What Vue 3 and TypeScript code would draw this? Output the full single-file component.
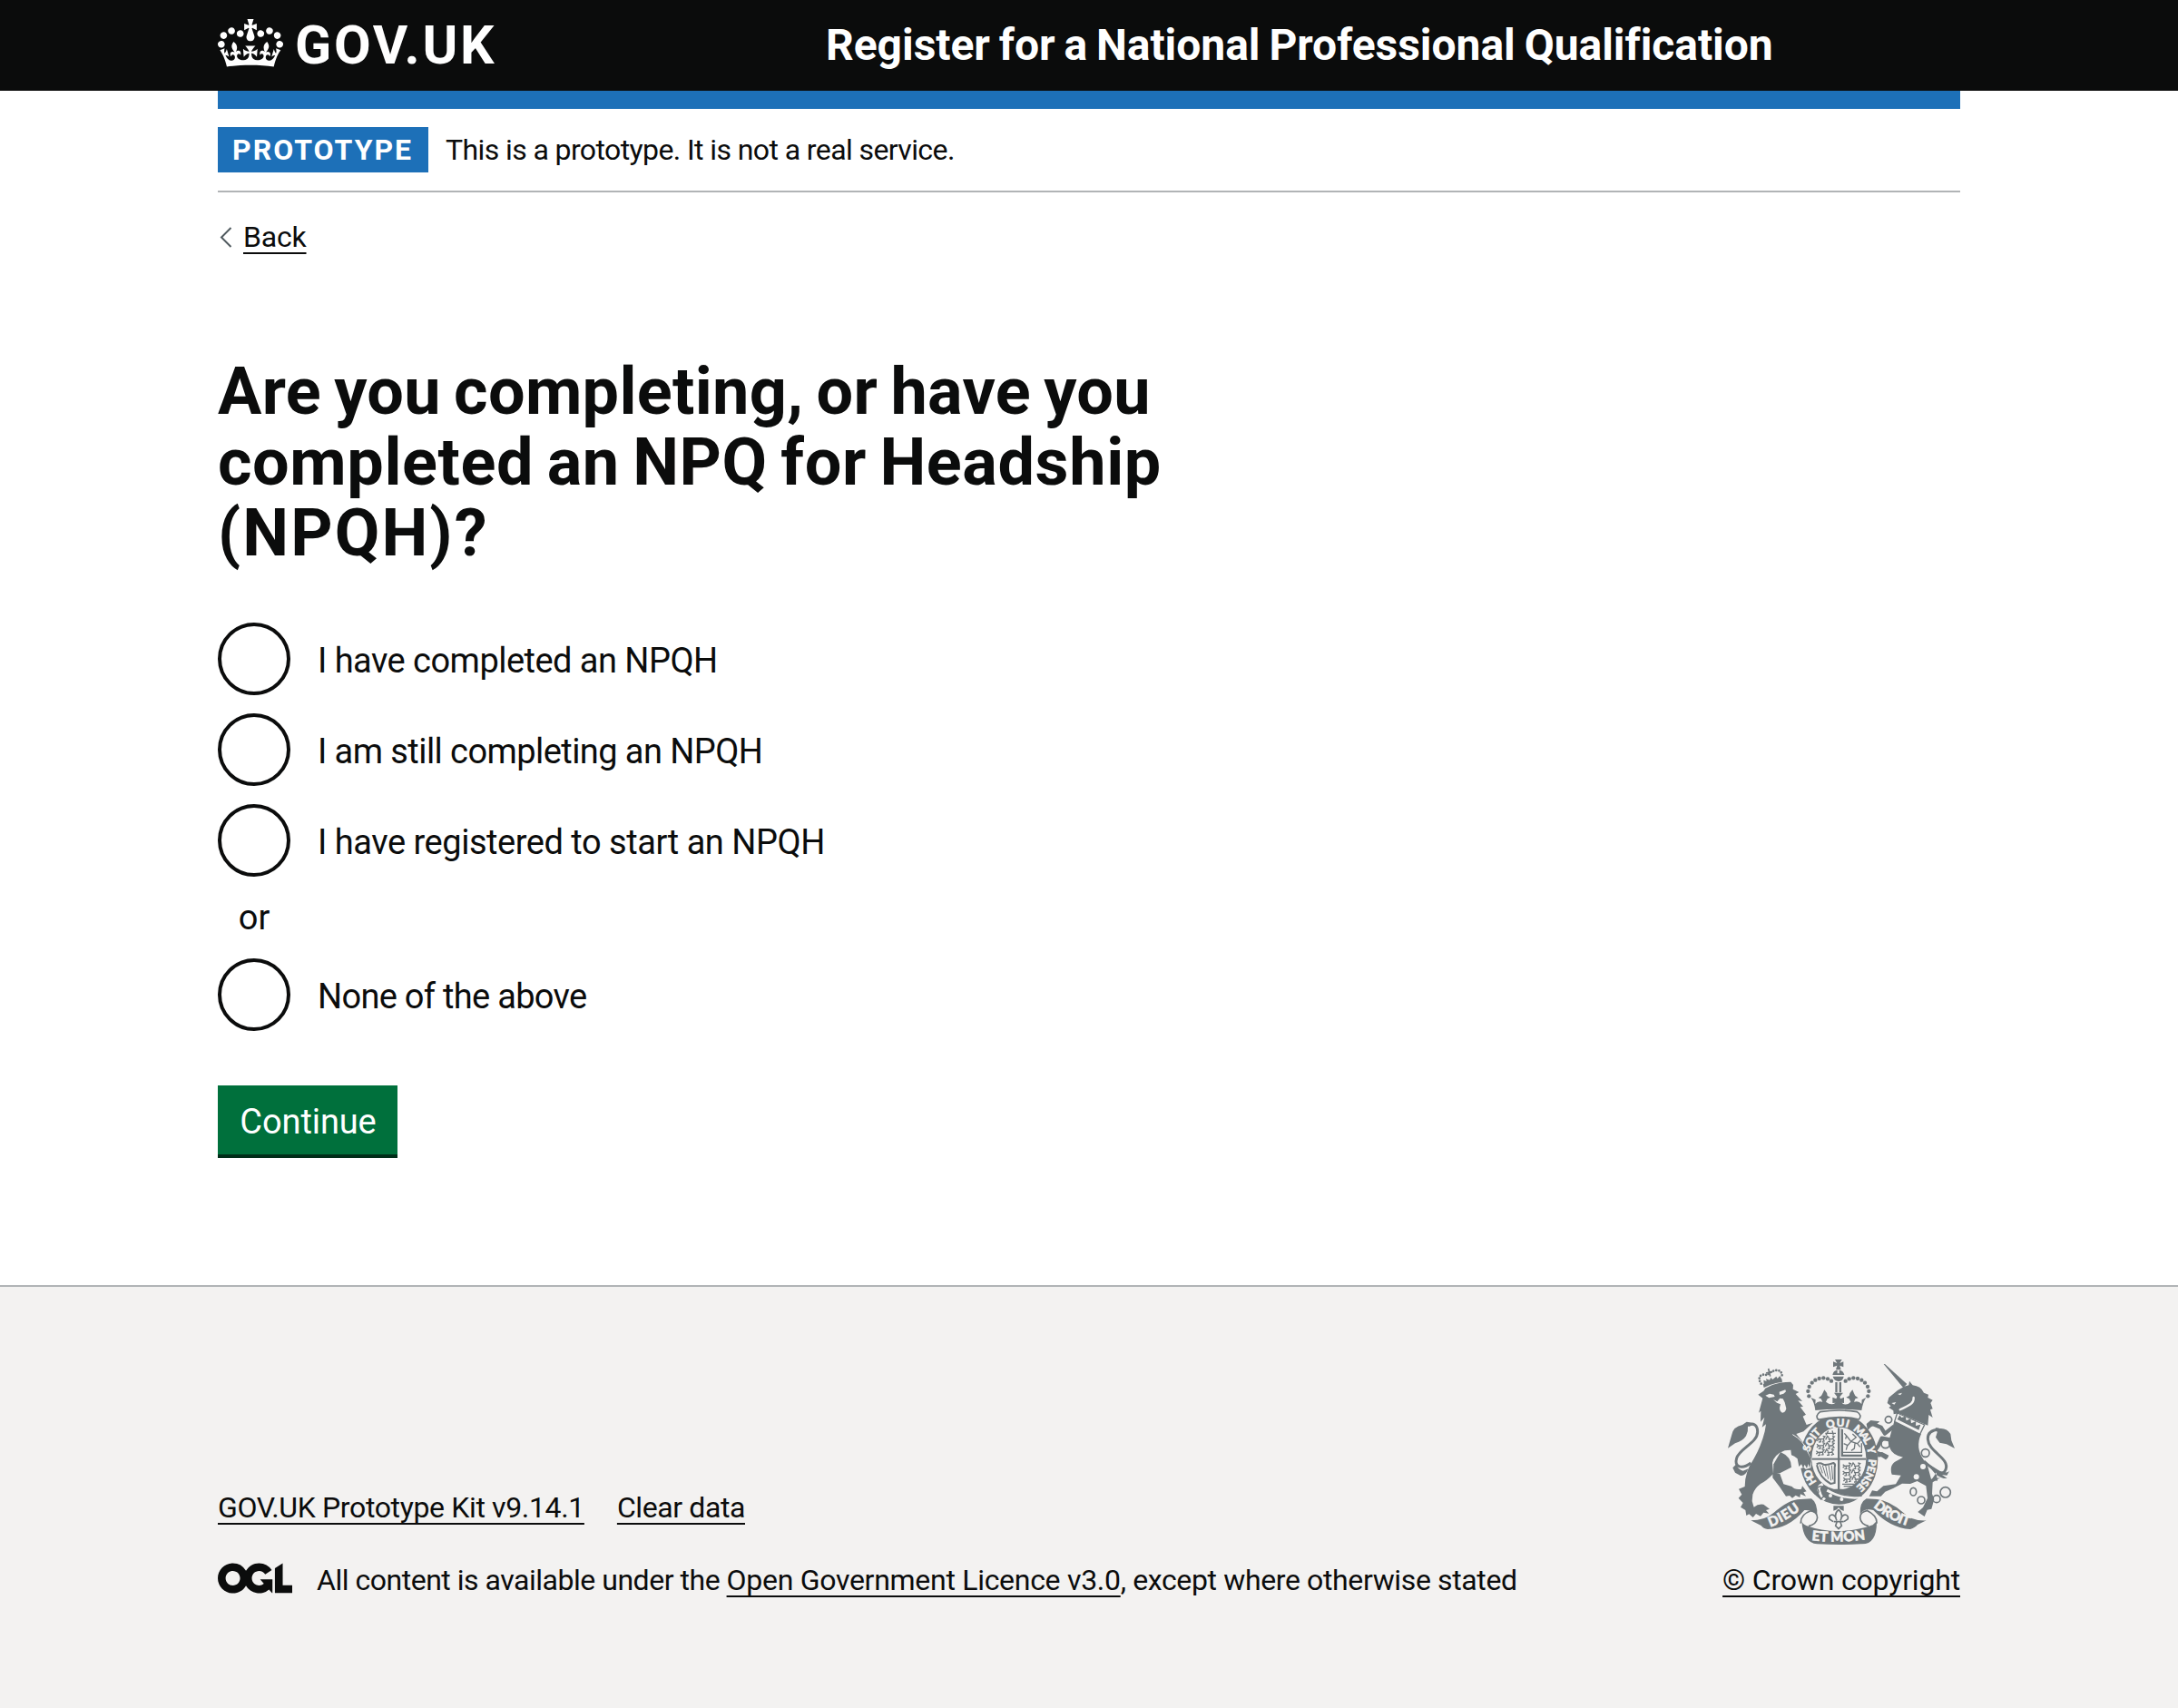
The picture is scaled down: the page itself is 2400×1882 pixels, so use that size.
<script setup lang="ts">
interface Run {
  text: string
  spacing: number
}

const headingLines: Run[] = [
  { text: 'Are you completing, or have you', spacing: 0.33 },
  { text: 'completed an NPQ for Headship', spacing: 0.6 },
  { text: '(NPQH)?', spacing: 2.1 },
]

const options: Run[] = [
  { text: 'I have completed an NPQH', spacing: -0.53 },
  { text: 'I am still completing an NPQH', spacing: -0.57 },
  { text: 'I have registered to start an NPQH', spacing: -0.47 },
]

const metaLinks: Run[] = [
  { text: 'GOV.UK Prototype Kit v9.14.1', spacing: -0.36 },
  { text: 'Clear data', spacing: -0.4 },
]

const track = (run: Run) => ({ letterSpacing: `${run.spacing}px` })

// Pearls on the arches of the St Edward's crown, left side; the right side is mirrored.
const pearls: [number, number][] = [
  [310, 145], [307, 129], [311, 114], [320, 101], [331, 92], [344, 87], [358, 85], [372, 88], [384, 95],
]

// Lions passant in the two England quarters of the shield.
const lions: [number, number][] = [
  [334, 282], [333, 304], [331, 326], [419, 371], [419, 393], [421, 415],
]
</script>

<template>
  <div class="page">
    <header class="header">
      <div class="wrap header-row">
        <a class="logo">
          <svg class="crown" viewBox="0 0 132 97" width="72" height="53">
            <path fill="currentColor" fill-rule="evenodd" d="M25 30.2c3.5 1.5 7.7-.2 9.1-3.7 1.5-3.6-.2-7.8-3.9-9.2-3.6-1.4-7.6.3-9.1 3.9-1.4 3.5.3 7.5 3.9 9zM9 39.5c3.6 1.5 7.8-.2 9.2-3.7 1.5-3.6-.2-7.8-3.9-9.1-3.6-1.5-7.6.2-9.1 3.8-1.4 3.5.3 7.5 3.8 9zM4.4 57.2c3.5 1.5 7.7-.2 9.1-3.8 1.5-3.6-.2-7.7-3.9-9.1-3.5-1.5-7.6.3-9.1 3.8-1.4 3.5.3 7.6 3.9 9.1zm38.3-21.4c3.5 1.5 7.7-.2 9.1-3.8 1.5-3.6-.2-7.7-3.9-9.1-3.6-1.5-7.6.3-9.1 3.8-1.3 3.6.4 7.7 3.9 9.1zm64.4-5.6c-3.6 1.5-7.8-.2-9.1-3.7-1.5-3.6.2-7.8 3.8-9.2 3.6-1.4 7.7.3 9.2 3.9 1.3 3.5-.4 7.5-3.9 9zm15.9 9.3c-3.6 1.5-7.7-.2-9.1-3.7-1.5-3.6.2-7.8 3.7-9.1 3.6-1.5 7.7.2 9.2 3.8 1.5 3.5-.3 7.5-3.8 9zm4.7 17.7c-3.6 1.5-7.8-.2-9.2-3.8-1.5-3.6.2-7.7 3.9-9.1 3.6-1.5 7.7.3 9.2 3.8 1.3 3.5-.4 7.6-3.9 9.1zM89.3 35.8c-3.6 1.5-7.8-.2-9.2-3.8-1.4-3.6.2-7.7 3.9-9.1 3.6-1.5 7.7.3 9.2 3.8 1.4 3.6-.3 7.7-3.9 9.1zM69.7 17.7l8.9 4.7V9.3l-8.9 2.8c-.2-.3-.5-.6-.9-.9L72.4 0H59.6l3.5 11.2c-.3.3-.6.5-.9.9l-8.8-2.8v13.1l8.8-4.7c.3.3.6.7.9.9l-5 15.4v.1c-.2.8-.4 1.6-.4 2.4 0 4.1 3.1 7.5 7 8.1h.2c.3 0 .7.1 1 .1.4 0 .7 0 1-.1h.2c4-.6 7.1-4.1 7.1-8.1 0-.8-.1-1.7-.4-2.4V34l-5.1-15.4c.4-.2.7-.6 1-.9zM66 92.8c16.9 0 32.8 1.1 47.1 3.2 4-16.9 8.9-26.7 14-33.5l-9.6-3.4c1 4.9 1.1 7.2 0 10.2-1.5-1.4-3-4.3-4.2-8.7L108.6 76c2.8-2 5-3.2 7.5-3.3-4.4 9.4-10 11.9-13.6 11.2-4.3-.8-6.3-4.6-5.6-7.9 1-4.7 5.7-5.9 8-.5 4.3-8.7-3-11.4-7.6-8.8 7.1-7.2 7.9-13.5 2.1-21.1-8 6.1-8.1 12.3-4.5 20.8-4.7-5.4-12.1-2.5-9.5 6.2 3.4-5.2 7.9-2 7.2 3.1-.6 4.3-6.4 7.8-13.5 7.2-10.3-.9-10.9-8-11.2-13.8 2.5-.5 7.1 1.8 11 7.3L80.2 60c-4.1 4.4-8 5.3-12.3 5.4 1.4-4.4 8-11.6 8-11.6H55.5s6.4 7.2 7.9 11.6c-4.2-.1-8-1-12.3-5.4l1.4 16.4c3.9-5.5 8.5-7.7 10.9-7.3-.3 5.8-.9 12.8-11.1 13.8-7.2.6-12.9-2.9-13.5-7.2-.7-5 3.8-8.3 7.1-3.1 2.7-8.7-4.6-11.6-9.4-6.2 3.7-8.5 3.6-14.7-4.6-20.8-5.8 7.6-5 13.9 2.2 21.1-4.7-2.6-11.9.1-7.7 8.8 2.3-5.5 7.1-4.2 8.1.5.7 3.3-1.3 7.1-5.7 7.9-3.5.7-9-1.8-13.5-11.2 2.5.1 4.7 1.3 7.5 3.3l-4.7-15.4c-1.2 4.4-2.7 7.2-4.3 8.7-1.1-3-.9-5.3 0-10.2l-9.5 3.4c5 6.9 9.9 16.7 14 33.5 14.8-2.1 30.8-3.2 47.7-3.2z" />
          </svg>
          <span class="logotype">GOV.UK</span>
        </a>
        <a class="service">Register for a National Professional Qualification</a>
      </div>
    </header>

    <div class="wrap">
      <div class="blue-bar"></div>
      <div class="phase">
        <strong class="tag">PROTOTYPE</strong>
        <span class="phase-text">This is a prototype. It is not a real service.</span>
      </div>

      <a class="back">
        <svg width="16" height="24" viewBox="0 0 16 24" fill="none" stroke="#505a5f" stroke-width="2">
          <path d="M14.5 2 4 12.5 14.5 23" />
        </svg>
        <span class="link back-text">Back</span>
      </a>

      <main>
        <h1>
          <span v-for="line in headingLines" :key="line.text" :style="track(line)">{{ line.text }}</span>
        </h1>

        <div class="radios">
          <label v-for="option in options" :key="option.text" class="radio">
            <span class="circle"></span>
            <span class="radio-text" :style="track(option)">{{ option.text }}</span>
          </label>
          <div class="divider">or</div>
          <label class="radio">
            <span class="circle"></span>
            <span class="radio-text none">None of the above</span>
          </label>
        </div>

        <button type="button" class="button">Continue</button>
      </main>
    </div>

    <footer class="footer">
      <div class="wrap footer-row">
        <div class="meta">
          <div class="meta-links">
            <a v-for="item in metaLinks" :key="item.text" class="link" :style="track(item)">{{ item.text }}</a>
          </div>
          <div class="licence">
            <svg class="ogl" viewBox="0 0 483.2 195.7" width="82" height="34">
              <path fill="currentColor" d="M421.5 142.8V.1l-50.7 32.3v161.1h112.4v-50.7zm-122.3-9.6A47.12 47.12 0 0 1 221 97.8c0-26 21.1-47.1 47.1-47.1 16.7 0 31.4 8.7 39.7 21.8l42.7-27.2A97.63 97.63 0 0 0 268.1 0c-36.5 0-68.3 20.1-85.1 49.7A98 98 0 0 0 97.8 0C43.9 0 0 43.9 0 97.8s43.9 97.8 97.8 97.8c36.5 0 68.3-20.1 85.1-49.7a97.76 97.76 0 0 0 149.6 25.4l19.4 22.2h3v-87.8h-80l24.3 27.5zM97.8 145c-26 0-47.1-21.1-47.1-47.1s21.1-47.1 47.1-47.1 47.1 21.1 47.1 47.1S123.8 145 97.8 145" />
            </svg>
            <p class="licence-text"><span class="lead">All content is available under the </span><a class="link ogl-link">Open Government Licence v3.0</a><span class="tail">, except where otherwise stated</span></p>
          </div>
        </div>

        <a class="crest-link">
          <svg class="crest" viewBox="42 24 750 612" width="250" height="204">
            <defs>
              <path id="garter" d="M409 465A98 110 0 0 1 409 245A98 110 0 0 1 409 465" />
              <path id="dieu" d="M182 577Q222 566 286 518" />
              <path id="droit" d="M522 511Q580 560 644 576" />
              <path id="mon" d="M319 622Q408 632 500 618" />
              <clipPath id="field"><ellipse cx="409" cy="351" rx="90" ry="103" /></clipPath>
            </defs>

            <!-- lion -->
            <g class="ink">
              <path d="M142 140L160 128 166 119Q200 98 250 98L258 108 257 122 277 132 266 138 288 162 274 160 291 180 281 181 300 206 290 212 302 240 323 233 292 262 268 270 292 300 298 318 316 350 319 370 312 383 308 369 303 384 296 371 291 383 285 370 277 378 272 352 262 344 252 340 250 323 230 325Q195 338 189 366L192 402Q170 425 150 435 130 450 124 470L122 492 128 512Q142 500 160 503L180 518 168 522 178 533 160 530 150 542 135 534 125 546 112 535 103 540 100 522 84 512 92 498 77 482 88 470 78 452 98 444Q98 395 128 352 152 310 164 262L168 238 155 248 163 215 150 230 151 194 144 200 157 152Z" />
              <path d="M190 400L214 402 226 436 254 444Q262 455 285 452L288 442 302 460 292 463 300 476 282 469 280 480 266 473 255 482 246 474 234 476 214 446 190 415Z" />
              <path d="M216 330Q252 345 252 380L214 400 192 404 193 370Z" />
              <path fill="none" stroke="currentColor" stroke-width="9" d="M110 242C128 232 140 242 140 263 140 300 80 318 71 350 62 380 88 388 118 366" />
              <path d="M130 234L104 230 90 240Q60 246 55 272L48 296 42 317 66 301Q92 293 102 277 110 262 108 246ZM58 382L66 398 84 408Q100 410 110 385L92 392Q76 390 70 370Z" />
              <path fill="none" stroke="currentColor" stroke-width="8" stroke-dasharray="0 9.5" stroke-linecap="round" d="M152 104C138 85 150 68 172 76C184 60 224 46 221 84" />
              <path d="M158 106Q185 92 220 88L222 98Q190 102 161 117ZM160 92L170 96 168 88 180 92 184 84 190 90 202 80 206 87 214 78 219 88 161 104Z" />
              <path fill="none" stroke="currentColor" stroke-width="5" d="M176 54L182 80M168 69L190 64" />
            </g>
            <path class="paper" d="M166 143L180 137 194 140 197 147 178 151ZM212 131L232 124 234 130 226 137 213 141ZM192 156L205 163 214 152 224 154 230 166 235 186Q232 200 222 200 213 196 213 184L216 172 204 167Z" />
            <path class="paper-line" stroke-width="3" d="M256 272Q290 290 312 335" />

            <!-- unicorn -->
            <g class="ink">
              <path d="M557 39L561 39 634 105 622 118Z" />
              <path d="M603 126L625 113 640 109 642 95 653 109Q680 112 690 134L705 140 703 150 719 158 712 168 719 187 711 190 719 216 706 207 703 242 660 224 606 202 590 205 589 193 574 183 581 178 569 168 574 150Z" />
              <path d="M592 228L681 270Q660 315 690 357L701 371 714 419 744 415 719 430 717 468 724 486 715 518 701 521 692 543 670 528 687 513 702 482 697 442 668 426 645 435 618 434Q590 450 562 461L548 476 509 476 519 457 535 460 556 442 597 436 614 407 584 404Q573 370 604 357L621 347Q586 340 578 318L572 300Z" />
              <path fill="none" stroke="currentColor" stroke-width="13" stroke-linejoin="round" d="M591 245L561 269 548 248 519 236 508 243M583 290L551 284 540 308 525 329 549 338 568 350" />
              <path d="M500 237L514 225 544 229 530 241 516 246 504 258ZM514 328L528 333 552 330 574 341 569 352 551 345 532 348Z" />
              <path fill="none" stroke="currentColor" stroke-width="9" d="M690 360C728 395 754 411 762 388C777 350 705 330 703 287C702 266 715 257 739 255" />
              <path d="M728 249L742 252Q766 250 778 270L781 292 792 318 765 304 742 299 729 281 734 265ZM704 368Q731 420 767 417L750 405 766 407 774 393Q763 403 742 392ZM731 397L735 425 714 422 724 409Z" />
            </g>
            <path class="paper-line" stroke-width="7" stroke-linecap="round" d="M611 190C636 177 658 172 656 150" />
            <path class="paper" d="M583 168L598 165 592 173ZM603 138L618 134 612 142Z" />
            <path class="paper" stroke="#6f777b" stroke-width="4" d="M602 201L692 240 677 271 593 229Z" />
            <path class="ink" d="M602 222L610 208 616 216 629 212 632 226 646 219 648 235 664 228 663 243 679 239 673 257Z" />
            <g fill="none" stroke="#6f777b" stroke-width="5">
              <circle cx="573" cy="223" r="11" />
              <circle cx="563" cy="303" r="14" /><circle cx="695" cy="333" r="13" />
              <ellipse cx="655" cy="461" rx="10" ry="13" /><circle cx="681" cy="489" r="12" />
              <circle cx="732" cy="485" r="12" /><circle cx="761" cy="463" r="17" />
            </g>
            <g class="paper"><circle cx="563" cy="303" r="9" /><circle cx="695" cy="333" r="9" /><circle cx="687" cy="378" r="9" /><circle cx="665" cy="412" r="9" /></g>

            <!-- garter and shield -->
            <path class="paper" d="M290 300A128 149 0 0 1 528 300L541 360 519 438 410 507 297 445 278 390 312 382 320 352Z" />
            <path class="ink" fill-rule="evenodd" d="M409 205A129 149 0 0 1 409 503 129 149 0 0 1 283 384L293 381 300 387 316 382 319 357 300 312 290 299A129 149 0 0 1 409 205ZM409 248A90 103 0 1 0 409 454 90 103 0 1 0 409 248Z" />
            <path class="paper-line" stroke-width="10" d="M356 436Q336 445 345 462T362 488M370 456Q425 485 480 479" />
            <g class="ink">
              <path fill="none" stroke="currentColor" stroke-width="4" d="M348 443L336 448Q348 461 336 473L350 486 360 474 352 461 366 447ZM358 450Q345 461 362 480M371 449Q420 482 485 474" />
              <rect x="405" y="250" width="7" height="207" />
              <rect x="320" y="350" width="178" height="6" />
              <path d="M398 452H421L428 462H390ZM416 253V345H486L487 338 423 338V255Z" />
            </g>
            <g class="paper"><circle cx="381" cy="474" r="6" /><circle cx="418" cy="486" r="6" /></g>
            <g clip-path="url(#field)" fill="none" stroke="#6f777b" stroke-width="4">
              <g v-for="[x, y] in lions" :key="`${x}-${y}`" :transform="`translate(${x} ${y})`">
                <path d="M3 0L9 5 3 11M9 5L24 4 29-3 22-5M24 4L26 12 20 13M13 6L15 14 8 15M31 7L37-5 43 2M40 5L53 5 60-3 53-5M56 5L60 11 52 14M44 6L45 14 38 14" />
              </g>
              <path stroke-width="4" d="M364 268H399M374 260L366 274M387 259L391 274M427 268L434 276 431 287M434 276L449 295 466 281 454 270M449 295L470 302 482 289M449 295L438 308 425 302M462 302L460 318 450 325M470 302L479 313M437 308L433 323M423 331H484V301M420 436H471L463 443H425" />
              <path stroke-width="6" d="M335 370Q346 364 356 370T391 366Q399 370 395 380V432L382 435Q345 415 336 373" />
              <path stroke-width="3" d="M346 373L355 400M355 374L366 410M365 374L374 419M375 374L383 424M385 374L389 421" />
            </g>
            <g class="motto garter-text">
              <text><textPath href="#garter" startOffset="84" textLength="48">HO</textPath></text>
              <text><textPath href="#garter" startOffset="188" textLength="76">SOIT</textPath></text>
              <text><textPath href="#garter" startOffset="287" textLength="70">QUI</textPath></text>
              <text><textPath href="#garter" startOffset="374" textLength="66">MAL</textPath></text>
              <text><textPath href="#garter" startOffset="449" textLength="20">Y</textPath></text>
              <text><textPath href="#garter" startOffset="488" textLength="104">PENSE</textPath></text>
            </g>

            <!-- crown -->
            <g class="ink">
              <path d="M396 24H419L412 36 424 31V49L412 44 416 58H399L403 44 390 49V31L403 36ZM388 75Q390 60 404 59V70H410V59Q424 60 427 75ZM389 80H425Q422 96 407 96 393 94 389 80ZM397 99H404V133H397ZM410 99H417V133H410Z" />
              <path d="M331 192Q328 165 316 150L332 157 331 171Q340 159 355 164L350 154 341 151 351 144Q356 135 361 124 371 134 371 144L381 149 371 154 366 164Q384 178 398 167L388 168V149L400 154 403 147 393 134H423L412 147 414 154 426 149V168L418 167Q433 180 448 164L443 154 433 149 443 144Q444 134 454 124 458 135 463 144L473 151 463 154 459 164Q475 159 484 171L485 157 499 150Q488 166 484 192 407 184 331 192Z" />
              <template v-for="[x, y] in pearls" :key="`${x}-${y}`">
                <circle :cx="x" :cy="y" r="6.5" /><circle :cx="815 - x" :cy="y" r="6.5" />
              </template>
            </g>
            <path class="paper" stroke="#6f777b" stroke-width="5" d="M347 197Q410 187 469 197Q487 209 475 222 410 207 341 223 329 210 347 197Z" />

            <!-- scrolls -->
            <g class="ink">
              <path d="M118 556Q164 556 193 531 247 484 283 486L318 484Q339 497 337 541 326 520 295 522 241 584 174 585Q159 584 152 573Z" />
              <path d="M698 556Q648 558 622 530 575 490 535 486L500 484Q477 496 479 536 493 514 523 522 578 581 645 585Q662 579 669 570Z" />
              <path d="M286 558Q289 568 301 573 350 591 407 591 471 590 521 571L534 558Q535 637 482 634 409 638 337 634 291 631 286 558Z" />
              <path fill="none" stroke="currentColor" stroke-width="5" d="M316 524Q281 536 283 566M313 524C348 529 345 565 309 575M501 523Q536 540 534 566M504 523C469 529 472 565 507 575" />
              <path d="M391 508H425V525L414 520 408 513 402 520 391 524Z" />
              <path fill="none" stroke="currentColor" stroke-width="5" d="M408 520Q425 535 414 556M408 520Q391 535 402 556M416 550C424 530 444 537 438 552L426 560M400 550C392 530 372 537 378 552L390 560M392 560H425M402 562L398 574 408 584 418 574 414 562" />
            </g>
            <g class="motto scroll-text">
              <text><textPath href="#dieu" textLength="115">DIEU</textPath></text>
              <text><textPath href="#droit" textLength="134">DROIT</textPath></text>
              <text><textPath href="#mon" textLength="178">ET MON</textPath></text>
            </g>
          </svg>
          <span class="link copyright">© Crown copyright</span>
        </a>
      </div>
    </footer>
  </div>
</template>

<style>
body {
  background: #ffffff;
}
</style>

<style scoped>
.page {
  height: 1882px;
  overflow: hidden;
  display: flex;
  flex-direction: column;
  font-family: Roboto, "Liberation Sans", sans-serif;
  font-size: 32px;
  line-height: 40px;
  color: #0b0c0c;
}
.wrap {
  width: 1920px;
  margin: 0 auto;
}
.header {
  height: 100px;
  background: #0b0c0c;
  color: #ffffff;
}
.header-row {
  display: flex;
  align-items: center;
  height: 100px;
}
.logo {
  display: flex;
  align-items: center;
  width: 670px;
}
.crown {
  flex: none;
  margin: -5px 13px 0 0;
}
.logotype {
  font-size: 59px;
  font-weight: 700;
  line-height: 60px;
  letter-spacing: 2.7px;
}
.service {
  font-size: 48px;
  font-weight: 700;
  line-height: 60px;
  letter-spacing: -0.04px;
  word-spacing: -2px;
  white-space: nowrap;
}
.blue-bar {
  height: 20px;
  background: #1d70b8;
}
.phase {
  display: flex;
  align-items: center;
  height: 90px;
  border-bottom: 2px solid #b1b4b6;
}
.tag {
  width: 232px;
  height: 50px;
  box-sizing: border-box;
  padding-left: 16px;
  margin-right: 19px;
  background: #1d70b8;
  color: #ffffff;
  line-height: 50px;
  letter-spacing: 2px;
}
.phase-text {
  letter-spacing: -0.6px;
}
.back {
  display: flex;
  align-items: center;
  width: max-content;
  height: 40px;
  margin-top: 29px;
}
.back-text {
  margin-left: 12px;
  letter-spacing: -0.2px;
}
.link {
  text-decoration: underline;
  text-decoration-thickness: 2px;
  text-underline-offset: 6px;
  text-decoration-skip-ink: none;
}
h1 {
  display: flex;
  flex-direction: column;
  margin: 112px 0 59px;
  font-size: 72px;
  font-weight: 700;
  line-height: 78px;
  word-spacing: -4px;
}
.radios {
  display: flex;
  flex-direction: column;
  font-size: 38px;
}
.radio {
  display: flex;
  align-items: center;
  height: 80px;
  margin-bottom: 20px;
}
.circle {
  box-sizing: border-box;
  width: 80px;
  height: 80px;
  border: 4px solid #0b0c0c;
  border-radius: 50%;
}
.radio-text {
  padding: 4px 0 0 30px;
}
.none {
  letter-spacing: -0.7px;
}
.divider {
  width: 80px;
  height: 50px;
  margin-bottom: 20px;
  line-height: 51px;
  text-align: center;
}
.button {
  display: block;
  width: 198px;
  height: 76px;
  margin-top: 40px;
  padding: 4px 0 0 1px;
  border: 0;
  background: #00703c;
  box-shadow: 0 4px 0 #002d18;
  color: #ffffff;
  font-family: inherit;
  font-size: 38px;
  line-height: 38px;
  letter-spacing: -0.1px;
}
.footer {
  flex: 1;
  margin-top: 144px;
  border-top: 2px solid #b1b4b6;
  background: #f3f2f1;
}
.footer-row {
  display: flex;
  justify-content: space-between;
  align-items: flex-end;
  height: 343px;
}
.meta {
  display: flex;
  flex-direction: column;
  gap: 40px;
}
.meta-links {
  display: flex;
  gap: 36px;
}
.licence {
  display: flex;
  align-items: center;
  height: 40px;
}
.ogl {
  margin: -4px 27px 0 0;
}
.licence-text {
  margin: 0;
  white-space: pre;
}
.lead {
  letter-spacing: -0.48px;
}
.ogl-link {
  letter-spacing: -0.29px;
}
.tail {
  letter-spacing: -0.37px;
}
.crest-link {
  display: flex;
  flex-direction: column;
  align-items: flex-end;
}
.crest {
  margin: 0 6px 19px 0;
  color: #6f777b;
}
.ink {
  fill: #6f777b;
}
.paper {
  fill: #f3f2f1;
}
.paper-line {
  fill: none;
  stroke: #f3f2f1;
}
.motto {
  fill: #f3f2f1;
  stroke: #f3f2f1;
  stroke-width: 1.6px;
  font-family: Lato, "Open Sans", sans-serif;
  font-weight: 900;
}
.garter-text {
  font-size: 35px;
}
.scroll-text {
  font-size: 45px;
}
.copyright {
  letter-spacing: -0.18px;
}
</style>
